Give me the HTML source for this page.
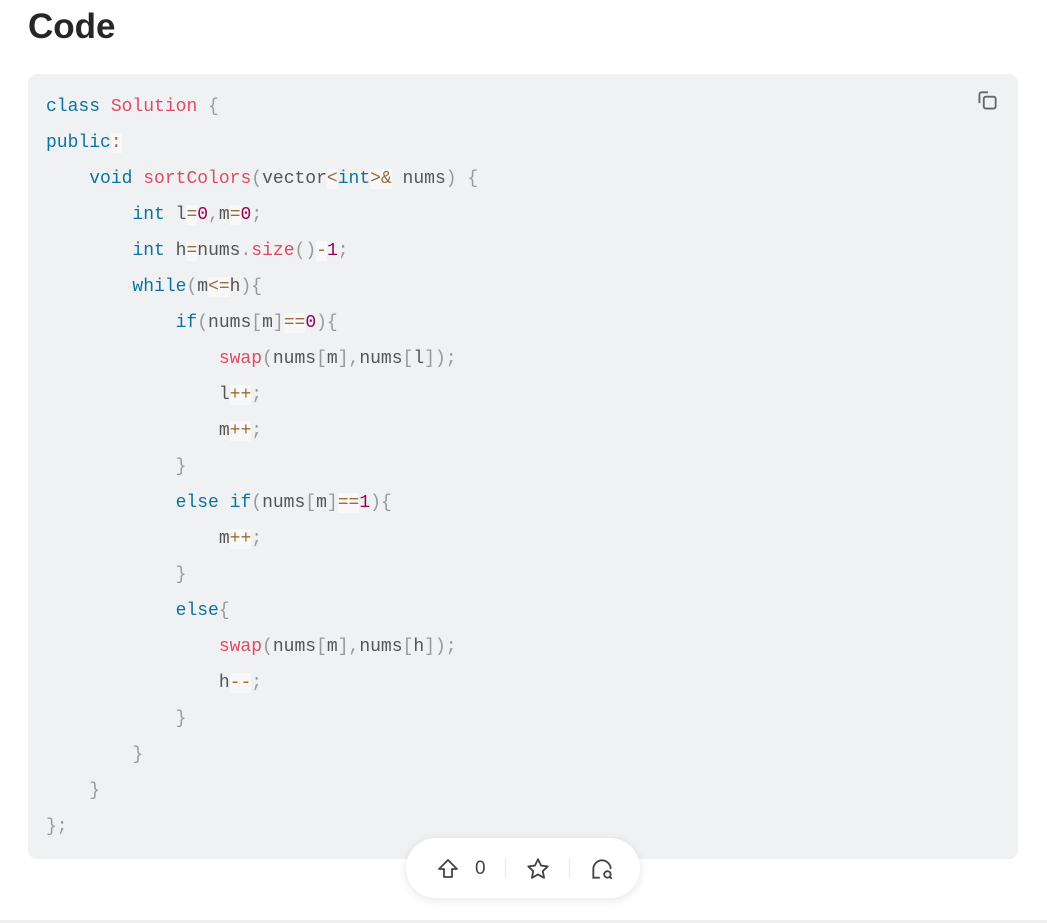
<!DOCTYPE html>
<html><head><meta charset="utf-8"><style>
body{margin:0;background:#fff;width:1047px;height:923px;overflow:hidden;position:relative;font-family:"Liberation Sans",sans-serif}
h1{position:absolute;left:28px;top:7px;margin:0;font-size:35px;font-weight:bold;color:#262626}
.code{position:absolute;left:28px;top:74px;width:990px;height:785px;background:#f0f1f3;border-radius:9px}
pre{margin:0;position:absolute;left:18px;top:15px;font-family:"Liberation Mono",monospace;font-size:18px;line-height:36px;color:#383a42}
.k{color:#0b73a0}.f{color:#dd4a68}.p{color:#999}.n{color:#905}.o{color:#9a6e3a;background:rgba(255,255,255,.5)}.v{color:#555}
.pill{position:absolute;left:406px;top:838px;width:234px;height:60px;background:#fff;border-radius:30px;box-shadow:0 2px 10px rgba(0,0,0,.1)}
.foot{position:absolute;left:0;top:920px;width:1047px;height:3px;background:#eee}
</style></head><body>
<h1>Code</h1>
<div class="code">
<svg style="position:absolute;left:946px;top:14px" width="26" height="26" viewBox="0 0 24 24" fill="none" stroke="#666" stroke-width="1.7"><path d="M5 14V6a2 2 0 0 1 2-2h6"/><rect x="9" y="8" width="11" height="11" rx="2"/></svg>
<pre><span class="k">class</span> <span class="f">Solution</span> <span class="p">{</span>
<span class="k">public</span><span class="o">:</span>
    <span class="k">void</span> <span class="f">sortColors</span><span class="p">(</span><span class="v">vector</span><span class="o">&lt;</span><span class="k">int</span><span class="o">&gt;&amp;</span> <span class="v">nums</span><span class="p">)</span> <span class="p">{</span>
        <span class="k">int</span> <span class="v">l</span><span class="o">=</span><span class="n">0</span><span class="p">,</span><span class="v">m</span><span class="o">=</span><span class="n">0</span><span class="p">;</span>
        <span class="k">int</span> <span class="v">h</span><span class="o">=</span><span class="v">nums</span><span class="p">.</span><span class="f">size</span><span class="p">()</span><span class="o">-</span><span class="n">1</span><span class="p">;</span>
        <span class="k">while</span><span class="p">(</span><span class="v">m</span><span class="o">&lt;=</span><span class="v">h</span><span class="p">){</span>
            <span class="k">if</span><span class="p">(</span><span class="v">nums</span><span class="p">[</span><span class="v">m</span><span class="p">]</span><span class="o">==</span><span class="n">0</span><span class="p">){</span>
                <span class="f">swap</span><span class="p">(</span><span class="v">nums</span><span class="p">[</span><span class="v">m</span><span class="p">],</span><span class="v">nums</span><span class="p">[</span><span class="v">l</span><span class="p">]);</span>
                <span class="v">l</span><span class="o">++</span><span class="p">;</span>
                <span class="v">m</span><span class="o">++</span><span class="p">;</span>
            <span class="p">}</span>
            <span class="k">else</span> <span class="k">if</span><span class="p">(</span><span class="v">nums</span><span class="p">[</span><span class="v">m</span><span class="p">]</span><span class="o">==</span><span class="n">1</span><span class="p">){</span>
                <span class="v">m</span><span class="o">++</span><span class="p">;</span>
            <span class="p">}</span>
            <span class="k">else</span><span class="p">{</span>
                <span class="f">swap</span><span class="p">(</span><span class="v">nums</span><span class="p">[</span><span class="v">m</span><span class="p">],</span><span class="v">nums</span><span class="p">[</span><span class="v">h</span><span class="p">]);</span>
                <span class="v">h</span><span class="o">--</span><span class="p">;</span>
            <span class="p">}</span>
        <span class="p">}</span>
    <span class="p">}</span>
<span class="p">};</span></pre>
</div>
<div class="pill">
<svg style="position:absolute;left:30px;top:19px" width="24" height="24" viewBox="0 0 24 24" fill="none" stroke="#444" stroke-width="1.8" stroke-linejoin="round"><path d="M12 3L3 12h5v8h8v-8h5z"/></svg>
<span style="position:absolute;left:69px;top:20px;font-size:19px;color:#444">0</span>
<div style="position:absolute;left:99px;top:21px;width:1px;height:18px;background:#e5e5e5"></div>
<svg style="position:absolute;left:119px;top:18px" width="26" height="26" viewBox="0 0 24 24" fill="none" stroke="#444" stroke-width="1.7" stroke-linejoin="round"><path d="M12 3l2.8 5.8 6.2.8-4.6 4.3 1.2 6.2L12 17l-5.6 3.1 1.2-6.2L3 9.6l6.2-.8z"/></svg>
<div style="position:absolute;left:163px;top:21px;width:1px;height:18px;background:#e5e5e5"></div>
<svg style="position:absolute;left:183px;top:18px" width="26" height="26" viewBox="0 0 24 24" fill="none" stroke="#444" stroke-width="1.7"><path d="M10 20H4v-8a8 8 0 0 1 16 0"/><circle cx="17" cy="17" r="3"/><path d="M19.2 19.2L21 21"/></svg>
</div>
<div class="foot"></div>
</body></html>
